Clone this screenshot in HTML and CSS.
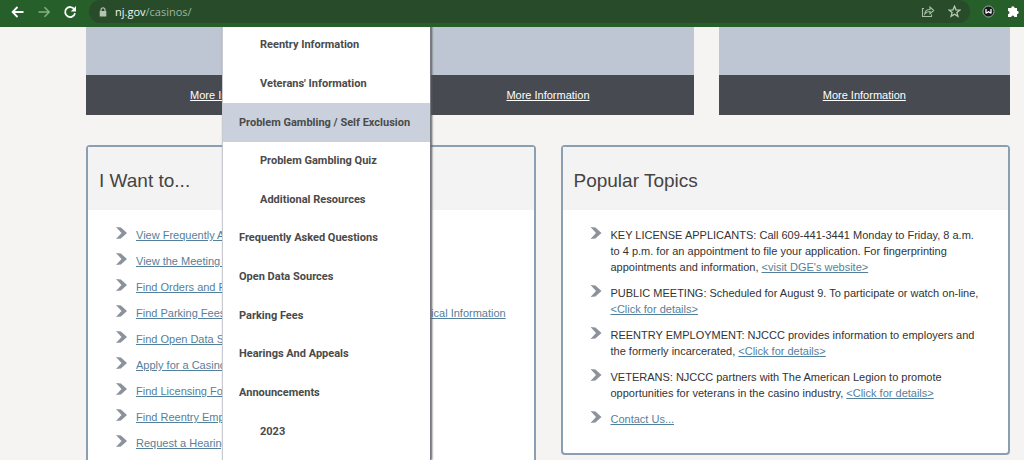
FILE: index.html
```html
<!DOCTYPE html>
<html lang="en">
<head>
<meta charset="utf-8">
<title>Casino Control Commission</title>
<link rel="stylesheet" href="styles.css">
</head>
<body>
<header class="toolbar">
  <button class="tool" aria-label="Back"><svg width="14" height="12" viewBox="0 0 14 12"><path d="M6.5 1 1.6 6l4.9 5M2 6h10.5" fill="none" stroke="#fff" stroke-width="1.8"/></svg></button>
  <button class="tool" aria-label="Forward"><svg width="14" height="12" viewBox="0 0 14 12"><path d="M7.5 1.2 12.2 6l-4.7 4.8M1.5 6H12" fill="none" stroke="#84b186" stroke-width="1.5"/></svg></button>
  <button class="tool" aria-label="Reload"><svg width="14" height="14" viewBox="0 0 14 14"><path d="M11.3 4.2A5 5 0 1 0 12 8.3" fill="none" stroke="#fff" stroke-width="1.8"/><path d="M13 1v5.400H7.800z" fill="#fff"/></svg></button>
  <div class="omnibox">
    <svg class="lock" width="8" height="10" viewBox="0 0 8 10"><path d="M2 5V2.800a2 2 0 0 1 4 0V5" fill="none" stroke="#b3c2b2" stroke-width="1.200"/><rect x=".7" y="4" width="6.600" height="5.600" rx=".6" fill="#b3c2b2"/></svg>
    <div class="address"><span class="host">nj.gov</span>/casinos/</div>
    <button class="tool" aria-label="Share"><svg width="14" height="13" viewBox="0 0 14 13"><path d="M3 3.500H1.500v8h9V9.500M3.800 9C4 6 6 4.500 9 4.500V2l3.700 3.500L9 8.800V6.500C6.500 6.500 5 7.300 3.800 9z" fill="none" stroke="#a9bfa9" stroke-width="1.100"/></svg></button>
    <button class="tool" aria-label="Bookmark this page"><svg width="13" height="13" viewBox="0 0 13 13"><path d="m6.500 1.300 1.500 3.500 3.900.3-3 2.500 1 3.800-3.400-2.100-3.400 2.100 1-3.800-3-2.500 3.900-.3z" fill="none" stroke="#b8cbb7" stroke-width="1.300"/></svg></button>
  </div>
  <button class="tool" aria-label="Extension"><svg width="13" height="13" viewBox="0 0 13 13"><circle cx="6.500" cy="6.500" r="5.500" fill="#161a1c" stroke="#9fb0a8"/><path d="M4 4v4.500M9 4v4.500M6.500 6v1.500M4 8.300l2.500-1.500L9 8.300" fill="none" stroke="#fff" stroke-width="1.300"/></svg></button>
  <button class="tool" aria-label="Extensions"><svg width="13" height="13" viewBox="0 0 13 13"><path d="M1 3h3.200a1.700 1.700 0 1 1 3.400 0H10v2.700a1.700 1.700 0 1 1 0 3.400V12H7.300a1.500 1.500 0 0 0-3 0H1V9a1.500 1.500 0 0 0 0-3z" fill="#fff"/></svg></button>
</header>
<main class="page">
  <section class="cards">
    <div class="card"><div class="card-foot"><a href="#">More Information</a></div></div>
    <div class="card"><div class="card-foot"><a href="#">More Information</a></div></div>
    <div class="card"><div class="card-foot"><a href="#">More Information</a></div></div>
  </section>
  <div class="panels">
    <section class="panel">
      <h2>I Want to...</h2>
      <ul class="list">
        <li><a href="#">View Frequently Asked Questions</a></li>
        <li><a href="#">View the Meeting Schedule</a></li>
        <li><a href="#">Find Orders and Resolutions</a></li>
        <li><a href="#">Find Parking Fees, Casino Revenue Tables and Other Historical Information</a></li>
        <li><a href="#">Find Open Data Sources</a></li>
        <li><a href="#">Apply for a Casino License</a></li>
        <li><a href="#">Find Licensing Forms</a></li>
        <li><a href="#">Find Reentry Employment</a></li>
        <li><a href="#">Request a Hearing</a></li>
      </ul>
    </section>
    <section class="panel">
      <h2>Popular Topics</h2>
      <ul class="list">
        <li>KEY LICENSE APPLICANTS: Call 609-441-3441 Monday to Friday, 8 a.m. to 4 p.m. for an appointment to file your application. For fingerprinting appointments and information, <a href="#">&lt;visit DGE's website&gt;</a></li>
        <li>PUBLIC MEETING: Scheduled for August 9. To participate or watch on-line, <a href="#">&lt;Click for details&gt;</a></li>
        <li>REENTRY EMPLOYMENT: NJCCC provides information to employers and the formerly incarcerated, <a href="#">&lt;Click for details&gt;</a></li>
        <li>VETERANS: NJCCC partners with The American Legion to promote opportunities for veterans in the casino industry, <a href="#">&lt;Click for details&gt;</a></li>
        <li><a href="#">Contact Us...</a></li>
      </ul>
    </section>
  </div>
  <nav class="menu">
    <a class="sub" href="#">Reentry Information</a>
    <a class="sub" href="#">Veterans' Information</a>
    <a class="current" href="#">Problem Gambling / Self Exclusion</a>
    <a class="sub" href="#">Problem Gambling Quiz</a>
    <a class="sub" href="#">Additional Resources</a>
    <a href="#">Frequently Asked Questions</a>
    <a href="#">Open Data Sources</a>
    <a href="#">Parking Fees</a>
    <a href="#">Hearings And Appeals</a>
    <a href="#">Announcements</a>
    <a class="sub" href="#">2023</a>
  </nav>
</main>
</body>
</html>
```
FILE: styles.css
```css
* { box-sizing: border-box; }
body {
  margin: 0;
  height: 100vh;
  overflow: hidden;
  display: flex;
  flex-direction: column;
  background: #f5f4f3;
  color: #333;
  font: 11px/16px "Liberation Sans", Arial, sans-serif;
}
.toolbar {
  flex: none;
  display: flex;
  align-items: center;
  gap: 12px;
  height: 27px;
  padding: 0 4px 4px 11px;
  background: #265f2a;
}
.tool {
  display: flex;
  padding: 0;
  border: 0;
  background: none;
}
.omnibox {
  flex: 1;
  display: flex;
  align-items: center;
  gap: 13px;
  height: 23px;
  padding: 0 9px 0 10px;
  border-radius: 12px;
  background: #284c29;
}
.lock { margin-right: -5px; }
.address {
  flex: 1;
  color: #9fb59e;
  font: 11px/16px "Open Sans", "Noto Sans", sans-serif;
}
.host { color: #f2f6f1; }
.page {
  flex: 1;
  position: relative;
  overflow: hidden;
  padding: 0 14px 0 86px;
}
.cards {
  display: grid;
  grid-template-columns: repeat(3, 1fr);
  gap: 25px;
}
.card {
  padding-top: 48px;
  background: #bec6d3;
}
.card-foot {
  padding: 12px;
  text-align: center;
  background: #474a50;
}
.card-foot a { color: #fff; }
.panels {
  display: grid;
  grid-template-columns: repeat(2, 1fr);
  align-items: start;
  gap: 25px;
  margin-top: 30px;
}
.panel {
  border: 2px solid #8b9fb3;
  border-radius: 4px;
  background: #fff;
}
.panel h2 {
  margin: 0;
  padding: 22px 11px 17px;
  background: #f3f3f3;
  color: #444;
  font-size: 19px;
  line-height: 24px;
  font-weight: 400;
}
.list {
  display: grid;
  gap: 10px;
  margin: 0;
  padding: 17px 24px 26px 48px;
  list-style: none;
}
.list li { position: relative; }
.list li::before {
  content: "";
  position: absolute;
  left: -20px;
  top: 0;
  width: 11px;
  height: 12px;
  background: #8c929c;
  clip-path: polygon(0 0, 45% 5%, 100% 50%, 45% 95%, 0 100%, 50% 50%);
}
.list a { color: #557f9b; }
.menu {
  position: absolute;
  left: 222px;
  top: -1px;
  bottom: 0;
  width: 209px;
  padding-bottom: 9px;
  display: grid;
  grid-auto-rows: 1fr;
  background: #fff;
  border: solid #777a80;
  border-width: 0 1px;
  border-left-color: #c8ccd2;
  box-shadow: 1px 0 2px #555;
}
.menu a {
  display: flex;
  align-items: center;
  padding: 0 16px;
  color: #4a4a4a;
  font-family: Roboto, "Liberation Sans", sans-serif;
  font-weight: 700;
  white-space: nowrap;
  text-decoration: none;
}
.menu .sub { padding-left: 37px; }
.menu .current { background: #cad1dd; }
```
